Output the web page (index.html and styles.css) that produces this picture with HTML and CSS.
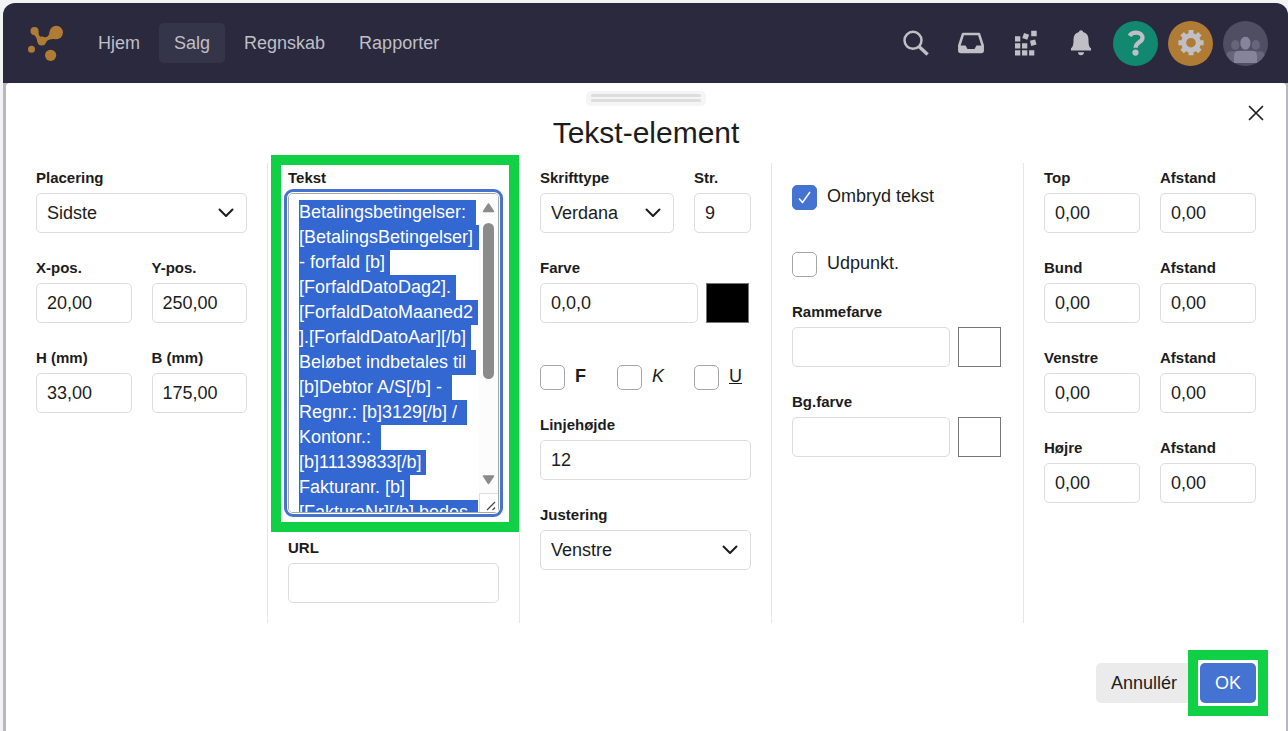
FILE: index.html
```
<!DOCTYPE html>
<html lang="da">
<head>
<meta charset="utf-8">
<title>Tekst-element</title>
<link rel="stylesheet" href="styles.css">
</head>
<body>
<div class="app">
  <header class="topbar">
    <a class="logo" href="#" aria-label="Forside">
      <svg width="36" height="36" viewBox="0 0 36 36" fill="#b07b35"><circle cx="6.500" cy="6" r="4"/><circle cx="28.300" cy="7.500" r="6.700"/><circle cx="13.800" cy="16" r="4.500"/><circle cx="3.500" cy="24.300" r="3.500"/><circle cx="22.600" cy="30.300" r="5.600"/><path d="M4 9C7 10 9 13 9.300 16.500L18 17.500C19 15 22 13.600 28 14.200L21.700 6C21.500 10.500 19.500 12.500 15.500 12.500C12 12.500 10.300 10.500 10.500 6z"/></svg>
    </a>
    <nav class="nav">
      <a href="#">Hjem</a>
      <a class="active" href="#">Salg</a>
      <a href="#">Regnskab</a>
      <a href="#">Rapporter</a>
    </nav>
    <div class="tools">
      <button class="tool" aria-label="Søg"><svg viewBox="0 0 45 45" fill="none" stroke="#bfbfc5"><circle cx="20" cy="19.300" r="8.500" stroke-width="2.500"/><path d="M26 25.500L34.600 33.400" stroke-width="3.400"/></svg></button>
      <button class="tool" aria-label="Indbakke"><svg viewBox="0 0 45 45"><path d="M15 13H31L34.700 24.500V29.500Q34.700 31 33.200 31H12.800Q11.300 31 11.300 29.500V24.500z" fill="none" stroke="#bfbfc5" stroke-width="2.500" stroke-linejoin="round"/><path d="M11 24.500H17.500L19.500 28H26.500L28.500 24.500H35V31H11z" fill="#bfbfc5"/></svg></button>
      <button class="tool" aria-label="Apps"><svg viewBox="0 0 45 45" fill="#bfbfc5"><path d="M12 15.200h5.300v5.300H12zM12 22.200h5.300v5.300H12zM12 29.200h5.300v5.300H12zM19 22.200h5.300v5.300H19zM19 29.200h5.300v5.300H19zM26.100 29.200h5.200v5.300h-5.200zM28.200 9.700h5.500v5.500h-5.500z"/><rect x="20" y="12.700" width="5.400" height="5.400" transform="rotate(20 22.700 15.400)"/><rect x="27.500" y="19" width="5.400" height="5.400" transform="rotate(-15 30.200 21.700)"/></svg></button>
      <button class="tool" aria-label="Notifikationer"><svg viewBox="0 0 45 45" fill="#bfbfc5"><path d="M23 9.300C24.200 9.300 25 10 25 11C28.600 11.800 30.500 14.500 30.500 18.500C30.500 23.500 31 26 33 27.200V29.400H13V27.200C15 26 15.500 23.500 15.500 18.500C15.500 14.500 17.400 11.800 21 11C21 10 21.800 9.300 23 9.300zM20 31.300H26C26 33 24.700 34.300 23 34.300S20 33 20 31.300z"/></svg></button>
      <button class="tool help" aria-label="Hjælp"><svg viewBox="0 0 45 45"><path d="M16.600 14.800C18 12.600 20.200 11.700 23 11.700C27 11.700 29.500 13.700 29.500 16.700C29.500 21.300 22.800 20.900 22.600 26.800" fill="none" stroke="#bfbfc5" stroke-width="4.300"/><circle cx="22.500" cy="31.600" r="3.100" fill="#bfbfc5"/></svg></button>
      <button class="tool settings" aria-label="Indstillinger"><svg viewBox="0 0 45 45"><g fill="none" stroke="#bfbfc5"><circle cx="23" cy="21.700" r="7.300" stroke-width="5"/><path stroke-width="5" d="M23 9.100V14M23 29.400V34.300M10.400 21.700H15.300M30.700 21.700H35.600M14.100 12.800L17.500 16.200M28.500 27.200L31.900 30.600M31.900 12.800L28.500 16.200M17.500 27.200L14.100 30.600"/></g></svg></button>
      <button class="tool user" aria-label="Bruger"><svg viewBox="0 0 45 45"><defs><clipPath id="round"><circle cx="22.500" cy="22.500" r="22.500"/></clipPath></defs><g clip-path="url(#round)"><g fill="#666579"><ellipse cx="12.300" cy="24" rx="4.200" ry="5"/><ellipse cx="32.800" cy="24" rx="4.200" ry="5"/><path d="M3 42V36Q3 30.300 8 30.300H37Q42 30.300 42 36V42z"/></g><g fill="#85849a"><ellipse cx="22.400" cy="22.200" rx="5.600" ry="7" stroke="#4f4e62"/><path d="M11 42V35Q11 29.700 16 29.700H29Q34 29.700 34 35V42z"/></g></g></svg></button>
    </div>
  </header>

  <main class="dialog" role="dialog" aria-labelledby="title">
    <div class="grip"><span></span><span></span></div>
    <button class="close" aria-label="Luk"><svg width="16" height="16" viewBox="0 0 16 16" stroke="#1c1c1c" stroke-width="1.700" stroke-linecap="round"><path d="M1.500 1.500L14.500 14.500M14.500 1.500L1.500 14.500"/></svg></button>
    <h1 id="title">Tekst-element</h1>

    <form class="columns" id="element">
      <section class="column">
        <div class="field"><label for="placering">Placering</label><select id="placering"><option>Sidste</option></select></div>
        <div class="pair">
          <div class="field"><label for="x">X-pos.</label><input type="text" id="x" value="20,00"></div>
          <div class="field"><label for="y">Y-pos.</label><input type="text" id="y" value="250,00"></div>
        </div>
        <div class="pair">
          <div class="field"><label for="h">H (mm)</label><input type="text" id="h" value="33,00"></div>
          <div class="field"><label for="b">B (mm)</label><input type="text" id="b" value="175,00"></div>
        </div>
      </section>

      <section class="column">
        <div class="field highlighted">
          <label for="tekst">Tekst</label>
          <div class="textbox">
            <textarea id="tekst" spellcheck="false">Betalingsbetingelser: 
[BetalingsBetingelser] - forfald [b][ForfaldDatoDag2].[ForfaldDatoMaaned2].[ForfaldDatoAar][/b]
Beløbet indbetales til [b]Debtor A/S[/b] - Regnr.: [b]3129[/b] / Kontonr.: 
[b]11139833[/b]
Fakturanr. [b][FakturaNr][/b] bedes angivet</textarea>
            <div class="scroller" aria-hidden="true">
              <svg width="19" height="18" viewBox="0 0 19 18"><path d="M9.500 9L14.500 16.500H4.500z" fill="#8b8b8b" stroke="#8b8b8b" stroke-width="1.500" stroke-linejoin="round"/></svg>
              <div class="track"><span></span></div>
              <svg width="19" height="18" viewBox="0 0 19 18"><path d="M4.500 1H14.500L9.500 8.500z" fill="#8b8b8b" stroke="#8b8b8b" stroke-width="1.500" stroke-linejoin="round"/></svg>
              <svg class="corner" width="19" height="19" viewBox="0 0 19 19"><path d="M.5 19V.5H19" fill="none" stroke="#ddd"/><path d="M8 17L16 9M13.500 17L16 14.500" stroke="#444" stroke-width="1.200"/></svg>
            </div>
          </div>
        </div>
        <div class="field"><label for="url">URL</label><input type="text" id="url"></div>
      </section>

      <section class="column">
        <div class="pair font">
          <div class="field"><label for="skrift">Skrifttype</label><select id="skrift"><option>Verdana</option></select></div>
          <div class="field"><label for="str">Str.</label><input type="text" id="str" value="9"></div>
        </div>
        <div class="field"><label for="farve">Farve</label><div class="color"><input type="text" id="farve" value="0,0,0"><button type="button" class="swatch black" aria-label="Vælg farve"></button></div></div>
        <div class="checks">
          <label class="check"><input type="checkbox"><b>F</b></label>
          <label class="check"><input type="checkbox"><i>K</i></label>
          <label class="check"><input type="checkbox"><u>U</u></label>
        </div>
        <div class="field"><label for="linje">Linjehøjde</label><input type="text" id="linje" value="12"></div>
        <div class="field"><label for="just">Justering</label><select id="just"><option>Venstre</option></select></div>
      </section>

      <section class="column">
        <div class="checks"><label class="check"><input type="checkbox" checked><span>Ombryd tekst</span></label></div>
        <div class="checks"><label class="check"><input type="checkbox"><span>Udpunkt.</span></label></div>
        <div class="field"><label for="ramme">Rammefarve</label><div class="color"><input type="text" id="ramme"><button type="button" class="swatch" aria-label="Vælg rammefarve"></button></div></div>
        <div class="field"><label for="bg">Bg.farve</label><div class="color"><input type="text" id="bg"><button type="button" class="swatch" aria-label="Vælg baggrundsfarve"></button></div></div>
      </section>

      <section class="column">
        <div class="pair">
          <div class="field"><label for="top">Top</label><input type="text" id="top" value="0,00"></div>
          <div class="field"><label for="top-a">Afstand</label><input type="text" id="top-a" value="0,00"></div>
        </div>
        <div class="pair">
          <div class="field"><label for="bund">Bund</label><input type="text" id="bund" value="0,00"></div>
          <div class="field"><label for="bund-a">Afstand</label><input type="text" id="bund-a" value="0,00"></div>
        </div>
        <div class="pair">
          <div class="field"><label for="venstre">Venstre</label><input type="text" id="venstre" value="0,00"></div>
          <div class="field"><label for="venstre-a">Afstand</label><input type="text" id="venstre-a" value="0,00"></div>
        </div>
        <div class="pair">
          <div class="field"><label for="hojre">Højre</label><input type="text" id="hojre" value="0,00"></div>
          <div class="field"><label for="hojre-a">Afstand</label><input type="text" id="hojre-a" value="0,00"></div>
        </div>
      </section>
    </form>

    <footer class="actions">
      <button class="btn">Annullér</button>
      <div class="marked"><button class="btn primary" form="element">OK</button></div>
    </footer>
  </main>
</div>
<script src="script.js"></script>
</body>
</html>
```
FILE: styles.css
```
* { box-sizing: border-box; }

body {
  margin: 0;
  background: #f3f3f5;
  color: #1c1c1c;
  font: 18px/25px "Liberation Sans", Arial, sans-serif;
}

button, input, select, textarea { font: inherit; color: inherit; }
button { cursor: pointer; }

.app {
  display: flex;
  flex-direction: column;
  min-height: 100vh;
  padding: 3px 0 0 3px;
  background: linear-gradient(#b9b8c1, #b9b8c1) 3px 30px no-repeat;
}

/* Top bar */
.topbar {
  display: flex;
  align-items: center;
  height: 80px;
  padding: 0 20px 0 25px;
  border-radius: 12px 12px 0 0;
  background: #2b293e;
}
.logo { display: flex; margin-right: 19px; }
.nav { display: flex; gap: 4px; }
.nav a {
  padding: 0 15px;
  border-radius: 5px;
  color: #bfbfc5;
  line-height: 40px;
  text-decoration: none;
}
.nav .active { background: #353549; }
.tools { display: flex; gap: 10px; margin-left: auto; }
.tool {
  width: 45px;
  height: 45px;
  padding: 0;
  border: 0;
  border-radius: 50%;
  background: none;
}
.tool svg { display: block; width: 100%; height: 100%; }
.help { background: #138871; }
.settings { background: #b07b35; }
.user { background: #4f4e62; }

/* Dialog */
.dialog {
  position: relative;
  flex: 1;
  margin: 0 2px 0 3px;
  padding: 8px 10px 0;
  border-radius: 4px 4px 0 0;
  background: #fff;
}
.grip {
  display: grid;
  gap: 2px;
  width: 120px;
  height: 15px;
  margin: 0 auto;
  padding: 3px 5px 4px;
  border-radius: 5px;
  background: #f5f5f5;
}
.grip span { border-radius: 2px; background: #ddd; }
.close {
  position: absolute;
  top: 22px;
  right: 22px;
  padding: 0;
  border: 0;
  background: none;
}
.close svg { display: block; }
h1 {
  margin: 7px 0 10px;
  font-size: 30px;
  font-weight: 400;
  line-height: 40px;
  text-align: center;
}

.columns {
  display: grid;
  grid-template-columns: repeat(5, minmax(0, 1fr));
  min-height: 460px;
}
.column {
  display: flex;
  flex-direction: column;
  gap: 20px;
  padding: 0 20px;
  border-right: 1px solid #e6e6e6;
}
.column:last-child { border-right: 0; }
.pair { display: grid; grid-template-columns: 1fr 1fr; gap: 20px; }
.font { grid-template-columns: 1fr 57px; }
.field { min-width: 0; }
.field > label {
  display: block;
  font-size: 15px;
  font-weight: 700;
  line-height: 30px;
}

input[type="text"], select {
  display: block;
  width: 100%;
  min-width: 0;
  height: 40px;
  padding: 0 10px;
  border: 1px solid #dcdcdc;
  border-radius: 5px;
  background: #fff;
}
select {
  appearance: none;
  background: #fff url("data:image/svg+xml,%3Csvg xmlns='http://www.w3.org/2000/svg' width='16' height='10' fill='none' stroke='%231c1c1c' stroke-width='2' stroke-linecap='round' stroke-linejoin='round'%3E%3Cpath d='M1.500 1.500L8 8L14.500 1.500'/%3E%3C/svg%3E") right 12px center no-repeat;
}

.color { display: flex; gap: 8px; padding-right: 2px; }
.color input { flex: 1; }
.swatch {
  width: 43px;
  height: 40px;
  padding: 0;
  border: 1px solid #767676;
  background: #fff;
}
.black { background: #000; }

.checks {
  display: grid;
  grid-template-columns: repeat(auto-fit, minmax(57px, 1fr));
  gap: 20px;
  padding-top: 22px;
}
.check { display: flex; gap: 10px; line-height: 22px; }
.check input {
  appearance: none;
  flex: none;
  width: 25px;
  height: 25px;
  margin: 0;
  border: 1px solid #a6a6a6;
  border-radius: 5px;
  background: #fff;
}
.check input:checked {
  border-color: #4573d2;
  background: #4573d2 url("data:image/svg+xml,%3Csvg xmlns='http://www.w3.org/2000/svg' width='13' height='13' fill='none' stroke='white' stroke-width='1.500'%3E%3Cpath d='M1 7.500L4.500 11.500L12 1'/%3E%3C/svg%3E") center no-repeat;
}

/* Multi-line text box with its own scroll bar */
.textbox { position: relative; height: 320px; }
textarea {
  display: block;
  width: 100%;
  height: 100%;
  padding: 6px 24px 0 10px;
  border: 1px solid #a6a6a6;
  border-radius: 5px;
  outline: 3px solid #4573d2;
  outline-offset: 1px;
  background: #fff;
  resize: none;
  overflow-y: scroll;
  scrollbar-width: none;
}
textarea::selection { background: #3367d1; color: #fff; }
.scroller {
  position: absolute;
  inset: 1px 1px 1px auto;
  display: flex;
  flex-direction: column;
  width: 19px;
  padding-top: 1px;
  border-radius: 0 4px 4px 0;
  background: #fcfcfc;
}
.scroller svg { display: block; flex: none; }
.track { flex: 1; padding: 10px 4px 0; }
.track span {
  display: block;
  height: 62%;
  border-radius: 6px;
  background: #8b8b8b;
}
.corner { background: #fff; }

/* Green attention frames */
.highlighted, .marked { position: relative; }
.highlighted::after, .marked::after {
  content: "";
  position: absolute;
  border: 10px solid #10d146;
  pointer-events: none;
}
.highlighted::after { inset: -8px -20px -19px -17px; }
.marked::after { inset: -13px -12px; }

.actions {
  display: flex;
  justify-content: flex-end;
  gap: 8px;
  padding: 40px 20px 28px;
}
.btn {
  height: 40px;
  padding: 0 15px;
  border: 0;
  border-radius: 5px;
  background: #ebebeb;
}
.primary { background: #4573d2; color: #fff; }
```
FILE: script.js
```
const text = document.getElementById("tekst");
text.focus({ preventScroll: true });
text.select();
text.scrollTop = 0;
```
